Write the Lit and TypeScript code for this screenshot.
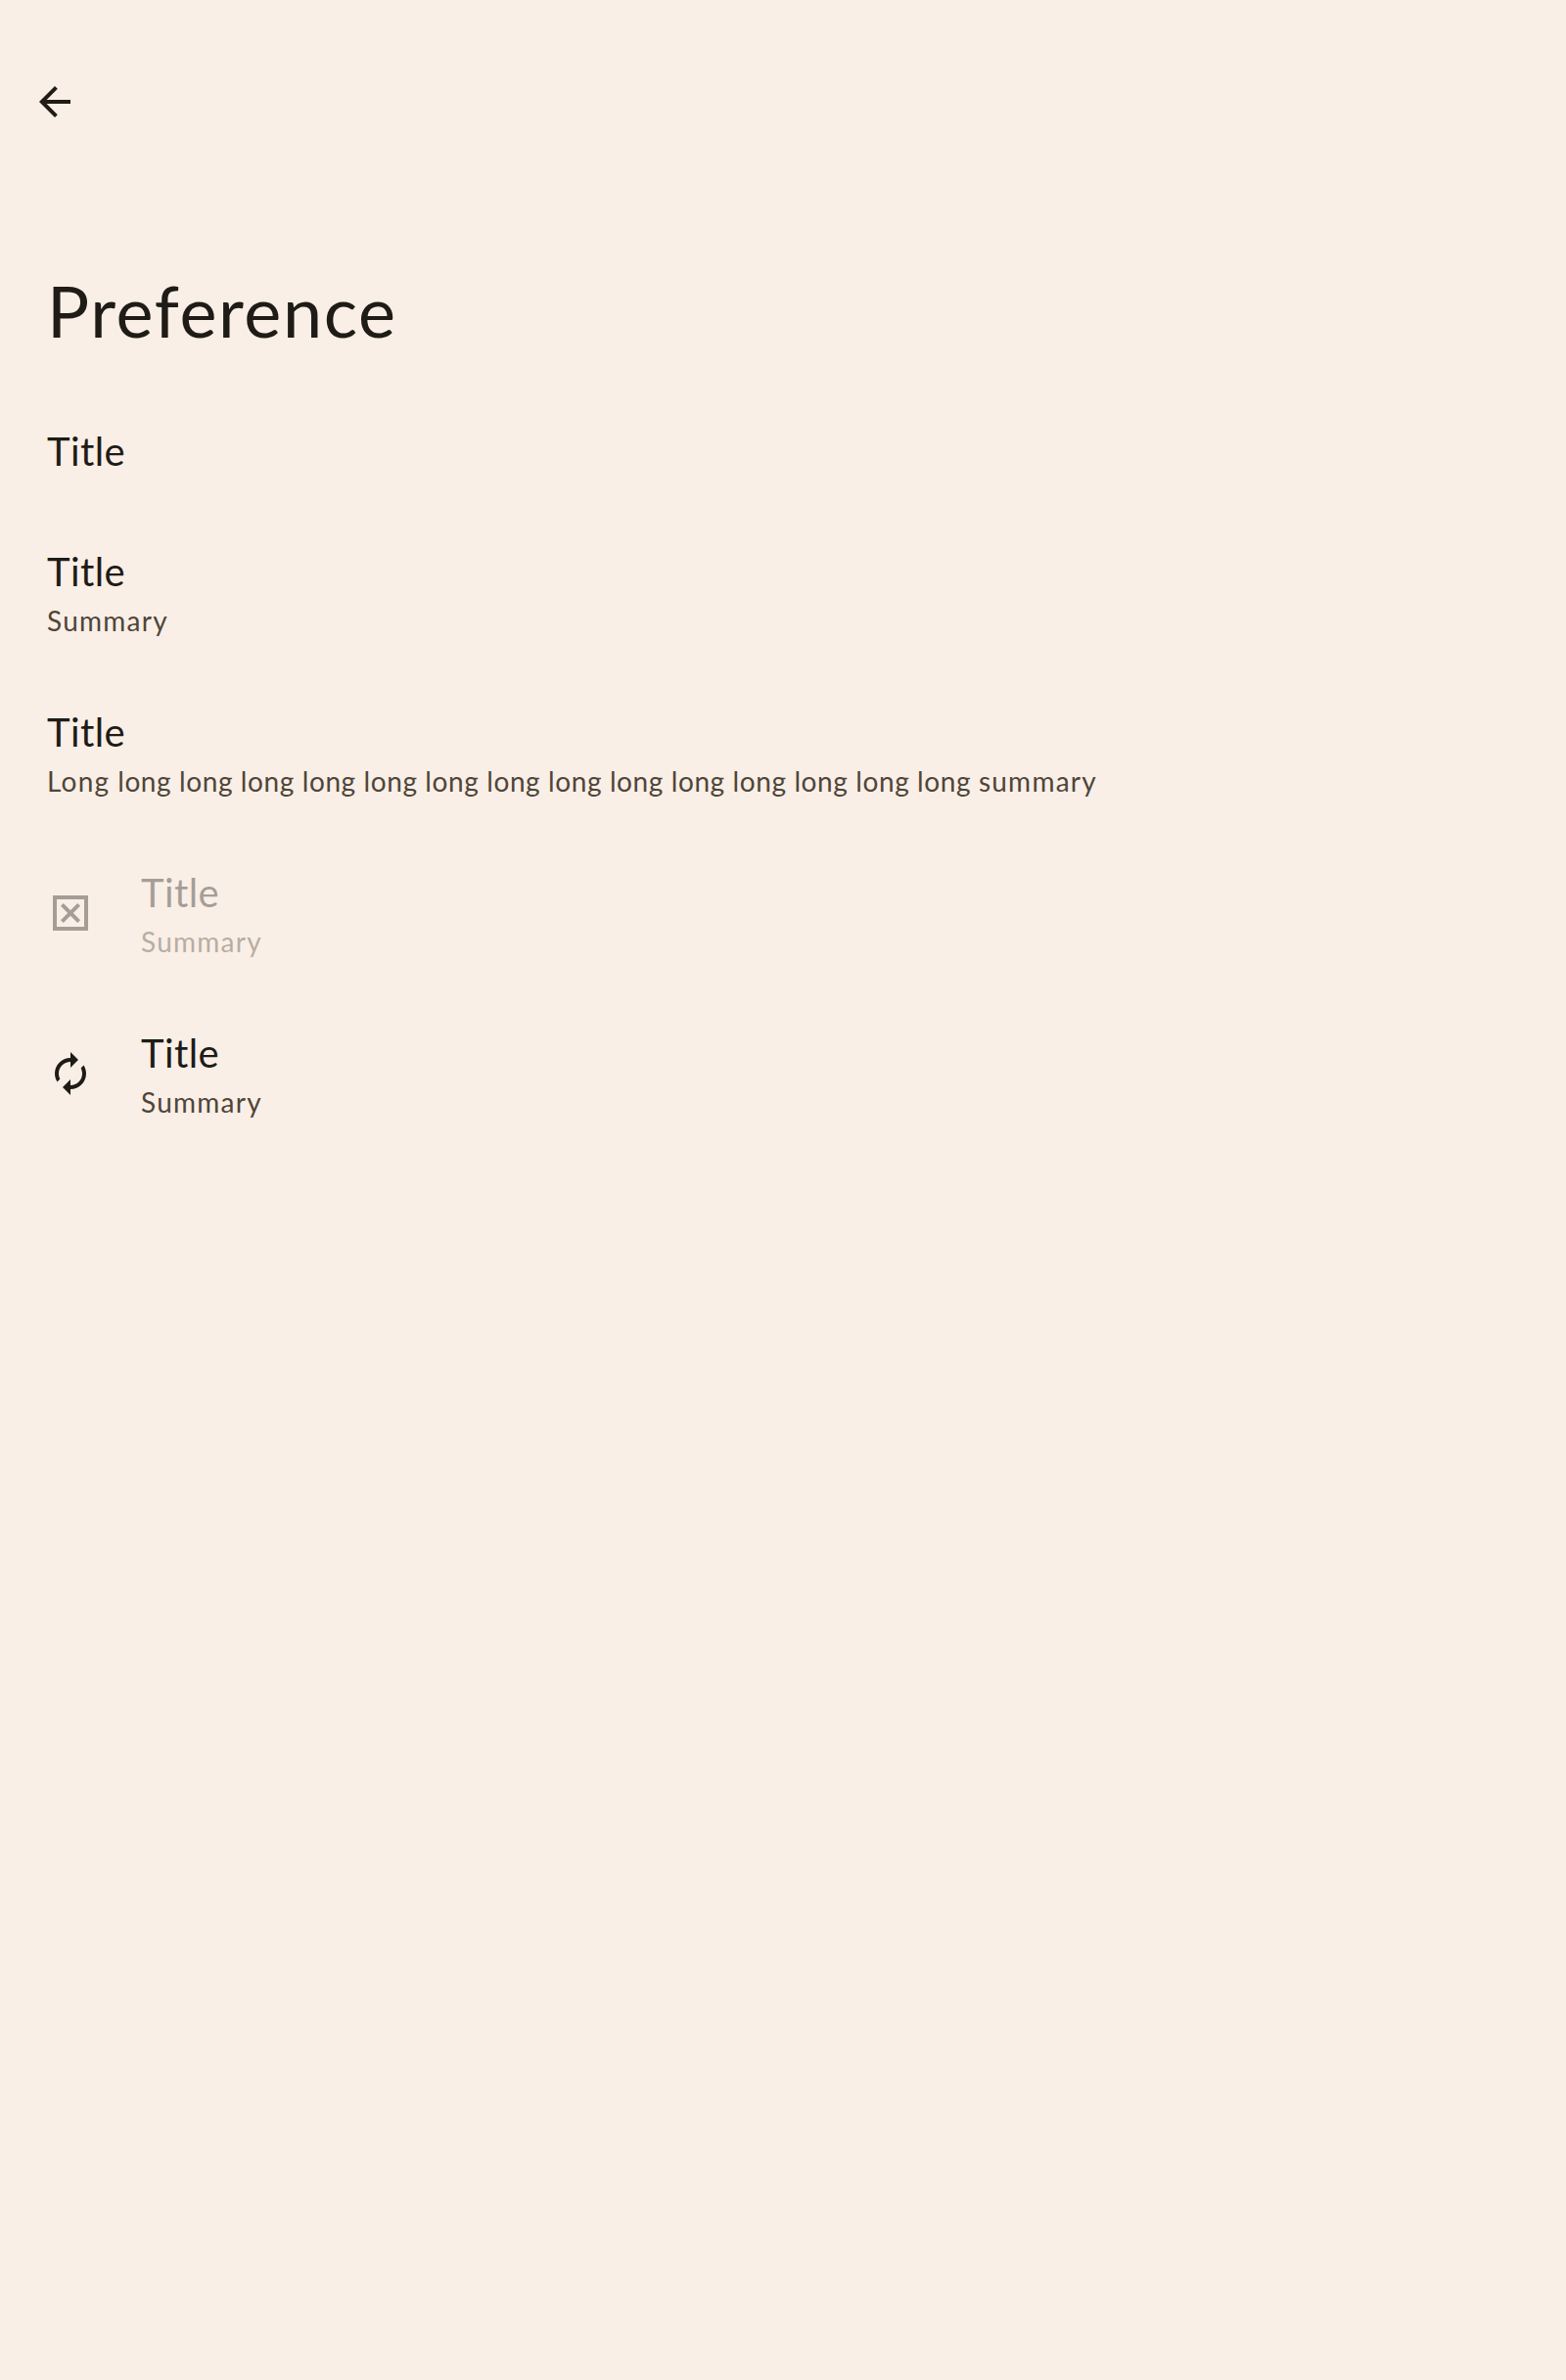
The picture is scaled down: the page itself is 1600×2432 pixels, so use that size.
import { LitElement, html, css, svg, nothing, SVGTemplateResult, TemplateResult } from "lit";
import { customElement } from "lit/decorators.js";
import { classMap } from "lit/directives/class-map.js";

interface Preference {
  title: string;
  summary?: string | TemplateResult;
  long?: boolean;
  icon?: SVGTemplateResult;
  disabled?: boolean;
}

const arrowBack = svg`<path d="M20 11H7.83l5.59-5.59L12 4l-8 8 8 8 1.41-1.41L7.83 13H20v-2z"/>`;
const disabledByDefault = svg`<path d="M19 19H5V5h14v14zM3 3v18h18V3H3zm14 12.59L15.59 17 12 13.41 8.41 17 7 15.59 10.59 12 7 8.41 8.41 7 12 10.59 15.59 7 17 8.41 13.41 12 17 15.59z"/>`;
const autorenew = svg`<path d="M12 6v3l4-4-4-4v3c-4.42 0-8 3.58-8 8 0 1.57.46 3.03 1.24 4.26L6.7 14.8c-.45-.83-.7-1.79-.7-2.8 0-3.31 2.69-6 6-6zm6.76 1.74L17.3 9.2c.44.84.7 1.79.7 2.8 0 3.31-2.69 6-6 6v-3l-4 4 4 4v-3c4.42 0 8-3.58 8-8 0-1.57-.46-3.03-1.24-4.26z"/>`;

const preferences: Preference[] = [
  { title: "Title" },
  { title: "Title", summary: "Summary" },
  {
    title: "Title",
    long: true,
    summary: html`<span class="wide">Long</span> long long long long long long long long long long long long long long <span class="wide">summary</span>`,
  },
  { title: "Title", summary: "Summary", icon: disabledByDefault, disabled: true },
  { title: "Title", summary: "Summary", icon: autorenew },
];

@customElement("app-root")
export class AppRoot extends LitElement {
  static styles = css`
    :host {
      display: block;
      box-sizing: border-box;
      min-height: 2432px;
      background: #f9efe6;
      color: #1f1b16;
      font-family: "Google Sans", Lato, sans-serif;
    }
    header {
      display: flex;
      flex-direction: column;
      align-items: flex-start;
      height: 400px;
      box-sizing: border-box;
      padding-top: 80px;
    }
    .back {
      display: flex;
      margin-left: 32px;
      padding: 0;
      border: 0;
      background: none;
      color: inherit;
    }
    svg {
      display: block;
      width: 48px;
      height: 48px;
      fill: currentColor;
    }
    h1 {
      margin: 145px 0 0 48px;
      font-size: 72px;
      line-height: 88px;
      font-weight: 400;
      letter-spacing: 1.6px;
    }
    .row {
      display: flex;
      align-items: center;
      padding: 36px 48px;
    }
    .icon {
      width: 96px;
    }
    .title {
      font-size: 40px;
      line-height: 51px;
      letter-spacing: 0.4px;
    }
    .summary {
      padding-top: 8px;
      color: #4f4539;
      font-size: 28px;
      line-height: 33px;
      letter-spacing: 1.25px;
    }
    .summary.long {
      letter-spacing: 0.6px;
    }
    .wide {
      letter-spacing: 1.25px;
    }
    .disabled .icon,
    .disabled .title,
    .disabled .summary {
      opacity: 0.38;
    }
  `;

  private row(p: Preference) {
    return html`<div class=${classMap({ row: true, disabled: !!p.disabled })}>
      ${p.icon ? html`<div class="icon"><svg viewBox="0 0 24 24">${p.icon}</svg></div>` : nothing}
      <div>
        <div class="title">${p.title}</div>
        ${p.summary
          ? html`<div class=${classMap({ summary: true, long: !!p.long })}>${p.summary}</div>`
          : nothing}
      </div>
    </div>`;
  }

  render() {
    return html`
      <header>
        <button class="back" aria-label="Back"><svg viewBox="0 0 24 24">${arrowBack}</svg></button>
        <h1>Preference</h1>
      </header>
      <main>${preferences.map((p) => this.row(p))}</main>
    `;
  }
}
